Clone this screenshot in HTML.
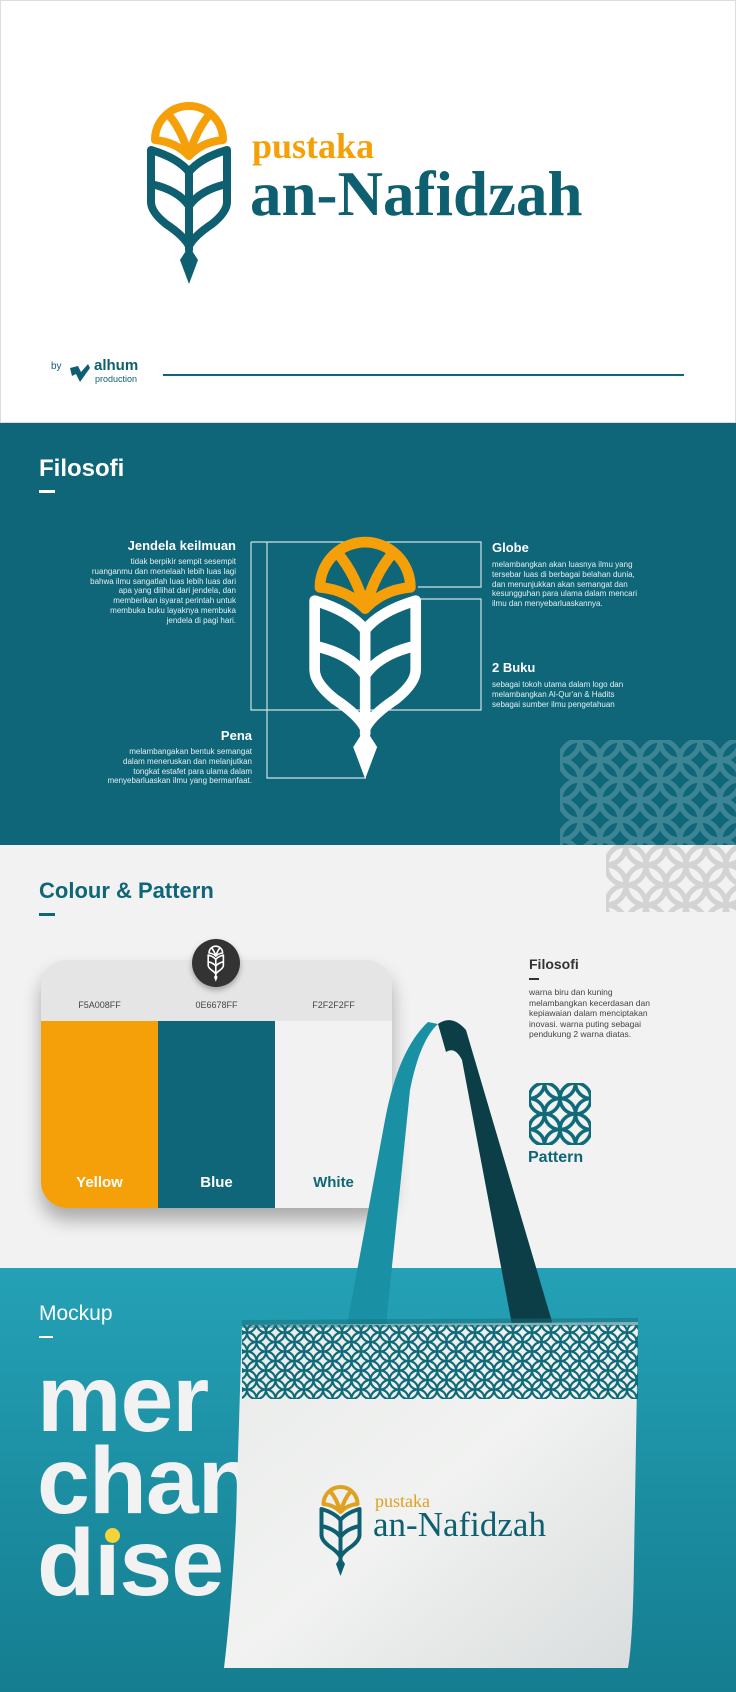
<!DOCTYPE html>
<html><head><meta charset="utf-8"><style>
*{margin:0;padding:0;box-sizing:border-box}
body{width:736px;height:1692px;position:relative;overflow:hidden;font-family:"Liberation Sans",sans-serif;background:#fff}
.abs{position:absolute}
.sec{position:absolute;left:0;width:736px}
.p{font-size:8px;line-height:9.8px;color:#e6f0f2}
.h{font-weight:bold;color:#fff;font-size:13px}
.dash{position:absolute;width:16px;height:3px}
</style></head><body>
<svg width="0" height="0" style="position:absolute">
<defs>
<g id="logo">
<g fill="none" stroke-linejoin="round" stroke-linecap="round" stroke-width="8">
<path stroke="var(--y)" d="M15,40 A34,34 0 0 1 83,40 M15,40 Q36,42 49,56 Q62,42 83,40 M49,56 Q42,30 28,14 M49,56 Q56,30 70,14"/>
<path stroke="var(--t)" d="M11,50 L11,102 Q11,112 26,124 Q44,136 49,146 Q54,136 72,124 Q87,112 87,102 L87,50 Q60,58 49,72 Q38,58 11,50 Z M49,72 L49,150 M11,84 Q38,90 49,106 Q60,90 87,84"/>
</g>
<path fill="var(--t)" d="M49,146 L40,160 L49,184 L58,160 Z"/>
</g>
<pattern id="pat" width="19" height="19" patternUnits="userSpaceOnUse">
<g fill="none" stroke="#0f6a7a" stroke-width="2.2"><circle cx="0" cy="0" r="9.5"/><circle cx="19" cy="0" r="9.5"/><circle cx="0" cy="19" r="9.5"/><circle cx="19" cy="19" r="9.5"/><circle cx="9.5" cy="9.5" r="9.5"/></g>
</pattern>
<pattern id="patg" width="40" height="40" patternUnits="userSpaceOnUse">
<g fill="none" stroke="#cfcfcf" stroke-width="5"><circle cx="0" cy="0" r="20"/><circle cx="40" cy="0" r="20"/><circle cx="0" cy="40" r="20"/><circle cx="40" cy="40" r="20"/><circle cx="20" cy="20" r="20"/></g>
</pattern>
<pattern id="patw" width="40" height="40" patternUnits="userSpaceOnUse">
<g fill="none" stroke="#3d8594" stroke-width="5"><circle cx="0" cy="0" r="20"/><circle cx="40" cy="0" r="20"/><circle cx="0" cy="40" r="20"/><circle cx="40" cy="40" r="20"/><circle cx="20" cy="20" r="20"/></g>
</pattern>
<linearGradient id="bagg" x1="0" y1="0" x2="1" y2="1"><stop offset="0" stop-color="#e9ebea"/><stop offset="0.5" stop-color="#f1f2f1"/><stop offset="1" stop-color="#d9dddd"/></linearGradient>
</defs></svg>

<!-- Section 1 -->
<div class="sec" style="top:0;height:423px;background:#fff;border:1px solid #ddd"></div>
<svg class="abs" style="left:140px;top:100px;--y:#f5a008;--t:#0e5f70" width="100" height="190" viewBox="0 0 100 190"><use href="#logo"/></svg>
<div class="abs" style="left:252px;top:126px;font-family:'Liberation Serif',serif;font-weight:bold;font-size:36px;color:#f5a008;line-height:40px">pustaka</div>
<div class="abs" style="left:250px;top:160px;font-family:'Liberation Serif',serif;font-weight:bold;font-size:63px;color:#0e5f70;line-height:68px">an-Nafidzah</div>
<div class="abs" style="left:51px;top:361px;font-size:10px;color:#0e5f70">by</div>
<svg class="abs" style="left:68px;top:362px" width="24" height="24" viewBox="0 0 24 24"><path d="M2,6 L10,4 L13,10 L20,2 L22,6 L12,20 L8,12 L4,14 Z" fill="#0e5f70"/></svg>
<div class="abs" style="left:94px;top:358px;font-size:15px;font-weight:bold;color:#0e5f70;line-height:16px">alhum</div>
<div class="abs" style="left:95px;top:374px;font-size:9px;color:#0e5f70;line-height:10px">production</div>
<div class="abs" style="left:163px;top:374px;width:521px;height:2px;background:#0e6678"></div>

<!-- Section 2 -->
<div class="sec" style="top:423px;height:422px;background:#0e6678"></div>
<svg class="abs" style="left:560px;top:740px" width="176" height="105"><rect width="176" height="105" fill="url(#patw)"/></svg>
<div class="abs" style="left:39px;top:455px;font-size:24px;font-weight:bold;color:#fff">Filosofi</div>
<div class="dash" style="left:39px;top:490px;background:#fff"></div>
<svg class="abs" style="left:0;top:423px" width="736" height="422">
<g fill="none" stroke="#cfe2e6" stroke-width="1.2">
<path d="M251,119 H481 V164 H418"/>
<path d="M418,176 H481 V287 H251 V119"/>
<path d="M267,119 V355 H366"/>
</g></svg>
<svg class="abs" style="left:300px;top:534px;--y:#f5a008;--t:#fff" width="133" height="253" viewBox="0 0 100 190"><use href="#logo"/></svg>
<div class="abs h" style="left:0;width:236px;text-align:right;top:538px">Jendela keilmuan</div>
<div class="abs p" style="left:0;width:236px;text-align:right;top:557px">tidak berpikir sempit sesempit<br>ruanganmu dan menelaah lebih luas lagi<br>bahwa ilmu sangatlah luas lebih luas dari<br>apa yang dilihat dari jendela, dan<br>memberikan isyarat perintah untuk<br>membuka buku layaknya membuka<br>jendela di pagi hari.</div>
<div class="abs h" style="left:492px;top:540px">Globe</div>
<div class="abs p" style="left:492px;top:560px">melambangkan akan luasnya ilmu yang<br>tersebar luas di berbagai belahan dunia,<br>dan menunjukkan akan semangat dan<br>kesungguhan para ulama dalam mencari<br>ilmu dan menyebarluaskannya.</div>
<div class="abs h" style="left:492px;top:660px">2 Buku</div>
<div class="abs p" style="left:492px;top:680px">sebagai tokoh utama dalam logo dan<br>melambangkan Al-Qur'an &amp; Hadits<br>sebagai sumber ilmu pengetahuan</div>
<div class="abs h" style="left:0;width:252px;text-align:right;top:728px">Pena</div>
<div class="abs p" style="left:0;width:252px;text-align:right;top:747px">melambangakan bentuk semangat<br>dalam meneruskan dan melanjutkan<br>tongkat estafet para ulama dalam<br>menyebarluaskan ilmu yang bermanfaat.</div>

<!-- Section 3 -->
<div class="sec" style="top:845px;height:423px;background:#f2f2f2"></div>
<svg class="abs" style="left:606px;top:845px" width="130" height="67"><rect width="130" height="67" fill="url(#patg)" opacity=".9"/></svg>
<div class="abs" style="left:39px;top:878px;font-size:22px;font-weight:bold;color:#0e6678">Colour &amp; Pattern</div>
<div class="dash" style="left:39px;top:913px;background:#0e6678"></div>
<div class="abs" style="left:41px;top:960px;width:351px;height:248px;border-radius:26px;overflow:hidden;box-shadow:0 12px 18px rgba(0,0,0,.3);background:#e6e6e6">
<div class="abs" style="left:0;top:0;width:351px;height:61px;background:#e5e5e5"></div>
<div class="abs" style="left:0;top:40px;width:117px;text-align:center;font-size:9px;color:#444">F5A008FF</div>
<div class="abs" style="left:117px;top:40px;width:117px;text-align:center;font-size:9px;color:#444">0E6678FF</div>
<div class="abs" style="left:234px;top:40px;width:117px;text-align:center;font-size:9px;color:#444">F2F2F2FF</div>
<div class="abs" style="left:0;top:61px;width:117px;height:187px;background:#f5a008"></div>
<div class="abs" style="left:117px;top:61px;width:117px;height:187px;background:#0e6678"></div>
<div class="abs" style="left:234px;top:61px;width:117px;height:187px;background:#f2f2f2"></div>
<div class="abs" style="left:0;top:214px;width:117px;text-align:center;font-size:15px;font-weight:bold;color:#fff">Yellow</div>
<div class="abs" style="left:117px;top:214px;width:117px;text-align:center;font-size:15px;font-weight:bold;color:#fff">Blue</div>
<div class="abs" style="left:234px;top:214px;width:117px;text-align:center;font-size:15px;font-weight:bold;color:#0e6678">White</div>
</div>
<div class="abs" style="left:192px;top:939px;width:48px;height:48px;border-radius:50%;background:#333;box-shadow:0 3px 6px rgba(0,0,0,.3)"></div>
<svg class="abs" style="left:206px;top:945px;--y:#fff;--t:#fff" width="20" height="38" viewBox="0 0 100 190"><use href="#logo"/></svg>
<div class="abs" style="left:529px;top:956px;font-size:14px;font-weight:bold;color:#333">Filosofi</div>
<div class="dash" style="left:529px;top:978px;width:10px;height:2px;background:#333"></div>
<div class="abs" style="left:529px;top:987px;font-size:8.5px;line-height:10.6px;color:#444">warna biru dan kuning<br>melambangkan kecerdasan dan<br>kepiawaian dalam menciptakan<br>inovasi. warna puting sebagai<br>pendukung 2 warna diatas.</div>
<svg class="abs" style="left:529px;top:1083px" width="62" height="62"><rect width="62" height="62" fill="url(#pat)" transform="scale(1.63)"/></svg>
<div class="abs" style="left:528px;top:1149px;font-size:16px;font-weight:bold;color:#0e6678">Pattern</div>

<!-- Section 4 -->
<div class="sec" style="top:1268px;height:424px;background:linear-gradient(#24a1b6,#157d90)"></div>
<div class="abs" style="left:39px;top:1302px;font-size:21px;color:#fff">Mockup</div>
<div class="dash" style="left:39px;top:1336px;width:14px;height:2px;background:#fff"></div>
<div class="abs" style="left:37px;top:1358px;font-size:95px;font-weight:bold;color:#f2f2f2;line-height:82px;letter-spacing:-1px">mer<br>chan<br>dıse</div>
<div class="abs" style="left:105px;top:1528px;width:15px;height:15px;border-radius:50%;background:#f7d33a"></div>

<!-- straps + bag -->
<svg class="abs" style="left:0;top:1000px" width="736" height="692">
<path d="M438,24 Q452,14 466,30 L553,325 L512,325 L462,60 Q455,46 446,52 Z" fill="#0b3e47"/>
<path d="M438,24 Q420,40 410,90 L386,325 L347,325 L385,120 Q398,50 428,22 Z" fill="#1990a3"/>
<path d="M242,325 L638,322 L634,560 Q633,640 628,668 L224,668 Q232,600 236,520 Z" fill="url(#bagg)"/>
<rect x="242" y="325" width="396" height="74" fill="url(#pat)"/>
<path d="M242,320 L638,318 L638,326 L242,328 Z" fill="#166f7c" opacity=".5"/>
</svg>
<svg class="abs" style="left:316px;top:1484px;--y:#e0a020;--t:#0e5f70" width="50" height="95" viewBox="0 0 100 190"><use href="#logo"/></svg>
<div class="abs" style="left:375px;top:1491px;font-family:'Liberation Serif',serif;font-size:18px;color:#e0a020">pustaka</div>
<div class="abs" style="left:373px;top:1505px;font-family:'Liberation Serif',serif;font-size:35px;color:#0e5f70">an-Nafidzah</div>
</body></html>
